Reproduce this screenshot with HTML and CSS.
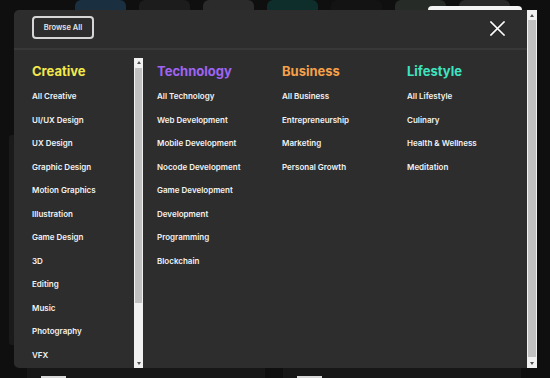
FILE: index.html
```html
<!DOCTYPE html>
<html lang="en">
<head>
<meta charset="utf-8">
<title>Browse categories</title>
<link rel="stylesheet" href="styles.css">
</head>
<body>
<div class="page">
  <div class="tiles">
    <div class="tile t-blue"></div>
    <div class="tile t-dark"></div>
    <div class="tile t-photo"></div>
    <div class="tile t-teal"></div>
    <div class="tile t-black"></div>
    <div class="tile t-photo2"></div>
    <div class="tile t-gray"></div>
  </div>
  <div class="popcard"></div>
  <div class="side-strip"></div>
  <div class="bottom-cards">
    <div class="bcard"><span class="bbar"></span></div>
    <div class="bcard"><span class="bbar"></span></div>
  </div>
</div>

<div class="modal">
  <div class="modal-main">
    <div class="modal-head">
      <button class="browse-btn">Browse All</button>
      <svg class="close" width="15" height="15" viewBox="0 0 15 15"><path d="M1 1 L14 14 M14 1 L1 14" stroke="#fff" stroke-width="1.6" fill="none" stroke-linecap="square"/></svg>
    </div>
    <div class="modal-body">
      <div class="col col-first">
        <div class="col-inner">
          <h3 class="cat creative">Creative</h3>
          <ul class="links">
            <li>All Creative</li>
            <li>UI/UX Design</li>
            <li>UX Design</li>
            <li>Graphic Design</li>
            <li>Motion Graphics</li>
            <li>Illustration</li>
            <li>Game Design</li>
            <li>3D</li>
            <li>Editing</li>
            <li>Music</li>
            <li>Photography</li>
            <li>VFX</li>
            <li>Animation</li>
            <li>Fashion</li>
          </ul>
        </div>
        <div class="sbar sbar-col">
          <div class="sbtn"><span class="arr-up"></span></div>
          <div class="strack"><div class="sthumb thumb-col"></div></div>
          <div class="sbtn"><span class="arr-down"></span></div>
        </div>
      </div>
      <div class="col">
        <h3 class="cat tech">Technology</h3>
        <ul class="links">
          <li>All Technology</li>
          <li>Web Development</li>
          <li>Mobile Development</li>
          <li>Nocode Development</li>
          <li>Game Development</li>
          <li>Development</li>
          <li>Programming</li>
          <li>Blockchain</li>
        </ul>
      </div>
      <div class="col">
        <h3 class="cat business">Business</h3>
        <ul class="links">
          <li>All Business</li>
          <li>Entrepreneurship</li>
          <li>Marketing</li>
          <li>Personal Growth</li>
        </ul>
      </div>
      <div class="col">
        <h3 class="cat lifestyle">Lifestyle</h3>
        <ul class="links">
          <li>All Lifestyle</li>
          <li>Culinary</li>
          <li>Health &amp; Wellness</li>
          <li>Meditation</li>
        </ul>
      </div>
    </div>
  </div>
  <div class="sbar sbar-modal">
    <div class="sbtn sbtn-lg"><span class="arr-up"></span></div>
    <div class="strack"><div class="sthumb thumb-modal"></div></div>
    <div class="sbtn sbtn-lg"><span class="arr-down"></span></div>
  </div>
</div>
</body>
</html>
```

FILE: styles.css
```css
* { box-sizing: border-box; }
html, body { margin: 0; padding: 0; }
body {
  background: #0f0f0f;
  width: 550px;
  height: 378px;
  overflow: hidden;
  font-family: "Inter", "Liberation Sans", sans-serif;
  position: relative;
}

/* background page behind the overlay */
.page { height: 378px; position: relative; }
.tiles {
  display: flex;
  gap: 13px;
  padding-left: 75px;
}
.tile {
  width: 51px;
  height: 40px;
  border-radius: 6px;
}
.t-blue { background: #1a2f40; }
.t-dark { background: #1c1c1c; }
.t-photo { background: #2b2b2b; }
.t-teal { background: #0d2e2b; }
.t-black { background: #131313; }
.t-photo2 { background: #272b27; }
.t-gray { background: #2a2a2a; }
.popcard {
  position: absolute;
  left: 428px;
  top: 6px;
  width: 94px;
  height: 40px;
  background: #f4f4f4;
  border-radius: 4px;
}
.side-strip {
  position: absolute;
  left: 9px;
  top: 135px;
  width: 10px;
  height: 210px;
  background: #1a1a1a;
  border-radius: 3px;
}
.bottom-cards {
  position: absolute;
  left: 27px;
  top: 360px;
  display: flex;
  gap: 18px;
}
.bcard {
  width: 238px;
  height: 18px;
  background: #171717;
  padding: 16px 0 0 14px;
}
.bbar {
  display: block;
  width: 25px;
  height: 2px;
  background: #d8d8d8;
}

/* modal overlay */
.modal {
  position: absolute;
  left: 14px;
  top: 10px;
  width: 523px;
  height: 358px;
  display: flex;
}
.modal-main {
  flex: 1;
  background: #2d2d2d;
  border-radius: 5px 0 0 5px;
  overflow: hidden;
  display: flex;
  flex-direction: column;
}
.modal-head {
  height: 40px;
  padding: 6px 22px 0 18px;
  border-bottom: 2px solid #383838;
  display: flex;
  justify-content: space-between;
  align-items: flex-start;
}
.browse-btn {
  width: 62px;
  height: 23px;
  border: 2px solid #d6d6d6;
  border-radius: 4px;
  background: transparent;
  color: #e4e4e4;
  font-family: "Inter", "Liberation Sans", sans-serif;
  font-weight: 600;
  font-size: 7.5px;
  padding: 0;
  display: flex;
  align-items: center;
  justify-content: center;
}
.close { margin-top: 5px; display: block; }

.modal-body {
  flex: 1;
  min-height: 0;
  padding-top: 8px;
  display: flex;
}
.col {
  width: 125px;
  padding: 5px 0 0 14px;
}
.col-first {
  width: 129px;
  padding: 0;
  display: flex;
  height: 310px;
}
.col-inner {
  flex: 1;
  padding: 5px 0 0 18px;
  overflow: hidden;
}
.cat {
  margin: 0 0 6px;
  font-size: 13px;
  line-height: 16px;
  font-weight: 700;
  letter-spacing: 0;
}
.creative { color: #f2e84c; }
.tech { color: #a064f3; }
.business { color: #f5a14a; }
.lifestyle { color: #3de4c0; }

.links {
  list-style: none;
  margin: 0;
  padding: 0;
}
.links li {
  font-size: 8px;
  line-height: 23.5px;
  font-weight: 600;
  color: #f2f2f2;
  white-space: nowrap;
}

/* scrollbars */
.sbar {
  display: flex;
  flex-direction: column;
  background: #f1f1f1;
}
.sbar-col { width: 9px; }
.sbar-modal { width: 10px; }
.sbtn {
  height: 9px;
  display: flex;
  align-items: center;
  justify-content: center;
}
.sbtn-lg { height: 10px; }
.arr-up, .arr-down {
  width: 0;
  height: 0;
  border-left: 2.5px solid transparent;
  border-right: 2.5px solid transparent;
}
.arr-up { border-bottom: 3px solid #505050; }
.arr-down { border-top: 3px solid #505050; }
.strack {
  flex: 1;
  padding: 0 1px;
}
.sthumb { background: #c1c1c1; }
.thumb-col { height: 235px; margin-top: 1px; }
.thumb-modal { height: 337px; }
```
